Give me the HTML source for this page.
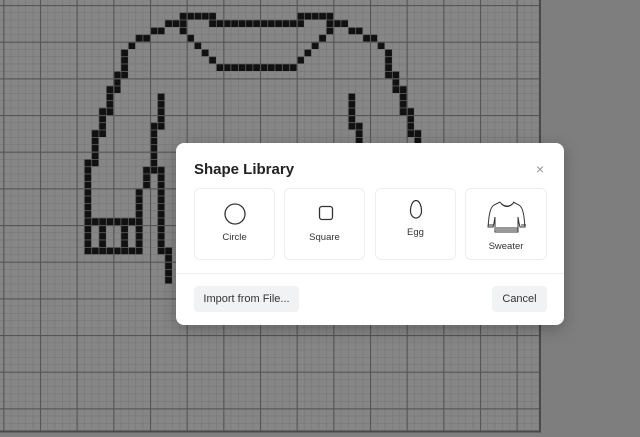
<!DOCTYPE html>
<html><head><meta charset="utf-8"><style>
html,body{margin:0;padding:0;width:640px;height:437px;overflow:hidden;background:#7e7e7e;font-family:"Liberation Sans",sans-serif}
#bg{position:absolute;left:0;top:0}
.dlg{position:absolute;left:176px;top:143px;width:388px;height:182px;background:#fff;border-radius:8px;box-shadow:0 4px 16px rgba(0,0,0,.25)}
.title{position:absolute;left:18px;top:18px;font-size:15px;font-weight:bold;color:#222}
.x{position:absolute;left:360px;top:18px;font-size:14px;color:#999}
.card{position:absolute;top:45px;width:81px;height:72px;border:1px solid #eceef0;border-radius:6px;box-sizing:border-box}
.lbl{position:absolute;left:0;right:0;text-align:center;font-size:9.5px;color:#333}
.sep{position:absolute;left:0;right:0;top:130px;height:1px;background:#eef0f2}
.btn{position:absolute;top:143px;height:26px;background:#f1f2f4;border-radius:4px;font-size:11px;color:#333;line-height:26px;text-align:center}
</style></head><body>
<svg id="bg" width="640" height="437" viewBox="0 0 640 437">
<defs>
<pattern id="mi" x="3.3" y="5" width="7.333" height="7.333" patternUnits="userSpaceOnUse"><path d="M0 0H7.333M0 0V7.333" stroke="#767676" stroke-width="1.2" fill="none"/></pattern>
<pattern id="ma" x="3.3" y="5" width="36.667" height="36.667" patternUnits="userSpaceOnUse"><path d="M0 0H36.667M0 0V36.667" stroke="#555" stroke-width="2.2" fill="none"/></pattern>
</defs>
<rect x="0" y="0" width="540" height="431" fill="#868686"/>
<g transform="translate(3.3 5) scale(7.3333)" fill="#111">
<path d="M24 1h5v1h-5zM40 1h5v1h-5z
M22 2h3v1h-3zM28 2h13v1h-13zM44 2h3v1h-3z
M20 3h2v1h-2zM24 3h1v1h-1zM44 3h1v1h-1zM47 3h2v1h-2z
M18 4h2v1h-2zM25 4h1v1h-1zM43 4h1v1h-1zM49 4h2v1h-2z
M17 5h1v1h-1zM26 5h1v1h-1zM42 5h1v1h-1zM51 5h1v1h-1z
M16 6h1v1h-1zM27 6h1v1h-1zM41 6h1v1h-1zM52 6h1v1h-1z
M16 7h1v1h-1zM28 7h1v1h-1zM40 7h1v1h-1zM52 7h1v1h-1z
M16 8h1v1h-1zM29 8h11v1h-11zM52 8h1v1h-1z
M15 9h2v1h-2zM52 9h2v1h-2z
M15 10h1v1h-1zM53 10h1v1h-1z
M14 11h2v1h-2zM53 11h2v1h-2z
M14 12h1v2h-1zM21 12h1v4h-1zM47 12h1v4h-1zM54 12h1v2h-1z
M13 14h2v1h-2zM54 14h2v1h-2z
M13 15h1v2h-1zM55 15h1v2h-1z
M20 16h2v1h-2zM47 16h2v1h-2z
M12 17h2v1h-2zM55 17h2v1h-2z
M12 18h1v3h-1zM56 18h1v3h-1zM20 17h1v5h-1zM48 17h1v5h-1z
M11 21h2v1h-2zM56 21h2v1h-2z
M11 22h1v7h-1zM57 22h1v7h-1z
M19 22h3v1h-3zM47 22h3v1h-3z
M19 23h1v2h-1zM49 23h1v2h-1zM21 23h1v6h-1zM47 23h1v6h-1z
M18 25h1v4h-1zM50 25h1v4h-1z
M11 29h8v1h-8zM50 29h8v1h-8zM21 29h1v4h-1zM47 29h1v4h-1z
M11 30h1v3h-1zM13 30h1v3h-1zM16 30h1v3h-1zM18 30h1v3h-1z
M57 30h1v3h-1zM55 30h1v3h-1zM52 30h1v3h-1zM50 30h1v3h-1z
M11 33h8v1h-8zM50 33h8v1h-8zM21 33h2v1h-2zM46 33h2v1h-2z
M22 34h1v4h-1zM46 34h1v4h-1z"/>
</g>
<rect x="0" y="0" width="540" height="431" fill="url(#mi)"/>
<rect x="0" y="0" width="540" height="431" fill="url(#ma)"/>
<path d="M540 0V431.5H0" stroke="#4a4a4a" stroke-width="2" fill="none"/>
</svg>
<div class="dlg">
<div class="title">Shape Library</div>
<div class="x">×</div>
<div class="card" style="left:18px">
<svg style="position:absolute;left:28px;top:13px" width="24" height="24"><circle cx="12" cy="12" r="10" fill="none" stroke="#333" stroke-width="1.3"/></svg>
<div class="lbl" style="top:43px">Circle</div></div>
<div class="card" style="left:108px">
<svg style="position:absolute;left:33px;top:16px" width="16" height="16"><rect x="1.5" y="1.5" width="13" height="13" rx="2.5" fill="none" stroke="#333" stroke-width="1.3"/></svg>
<div class="lbl" style="top:43px">Square</div></div>
<div class="card" style="left:199px">
<svg style="position:absolute;left:33px;top:10px" width="14" height="22"><path d="M7 1.5C3.5 1.5 1.5 7 1.5 12c0 4 2.5 7 5.5 7s5.5-3 5.5-7C12.5 7 10.5 1.5 7 1.5z" fill="none" stroke="#333" stroke-width="1.2"/></svg>
<div class="lbl" style="top:38px">Egg</div></div>
<div class="card" style="left:289px;width:82px">
<svg style="position:absolute;left:21px;top:11px" width="40" height="34" viewBox="0 0 40 34" fill="none" stroke="#333" stroke-width="1"><path d="M13 2l-6 3c-3 2-4 6-5 12l-1 10h5l1-4 1-6v15h23V17l1 6 1 4h5l-1-10c-1-6-2-10-5-12l-6-3"/><path d="M13 2c2 3 4 4 7 4s5-1 7-4"/><path d="M14 3.5c2 2 4 3 6 3s4-1 6-3"/><path d="M9 28h22M9 30h22"/><path d="M1 25h5M34 25h5"/></svg>
<div class="lbl" style="top:52px">Sweater</div></div>
<div class="sep"></div>
<div class="btn" style="left:18px;width:105px">Import from File...</div>
<div class="btn" style="left:316px;width:55px">Cancel</div>
</div>
</body></html>
